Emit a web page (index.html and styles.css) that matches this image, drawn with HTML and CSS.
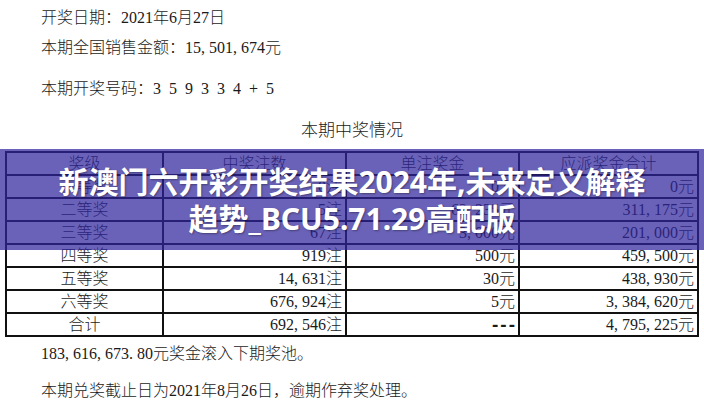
FILE: index.html
```html
<!DOCTYPE html>
<html lang="zh-CN">
<head>
<meta charset="utf-8">
<link rel="stylesheet" href="styles.css">
</head>
<body>
<div class="page">
  <div class="info">
    <p class="line l1">开奖日期：2021年6月27日</p>
    <p class="line l2">本期全国销售金额：15, 501, 674元</p>
    <p class="line l3">本期开奖号码：3&nbsp;&nbsp;5&nbsp;&nbsp;9&nbsp;&nbsp;3&nbsp;&nbsp;3&nbsp;&nbsp;4&nbsp;&nbsp;+&nbsp;&nbsp;5</p>
  </div>
  <p class="title">本期中奖情况</p>
  <table class="prize">
    <colgroup>
      <col class="c1"><col class="c2"><col class="c3"><col class="c4">
    </colgroup>
    <tr class="head"><th>奖级</th><th>中奖注数</th><th>单注奖金</th><th>应派奖金合计</th></tr>
    <tr><td class="lv">一等奖</td><td>0注</td><td>0元</td><td>0元</td></tr>
    <tr><td class="lv">二等奖</td><td>5注</td><td>62, 235元</td><td>311, 175元</td></tr>
    <tr><td class="lv">三等奖</td><td>67注</td><td>3, 000元</td><td>201, 000元</td></tr>
    <tr><td class="lv">四等奖</td><td>919注</td><td>500元</td><td>459, 500元</td></tr>
    <tr><td class="lv">五等奖</td><td>14, 631注</td><td>30元</td><td>438, 930元</td></tr>
    <tr><td class="lv">六等奖</td><td>676, 924注</td><td>5元</td><td>3, 384, 620元</td></tr>
    <tr><td class="lv">合计</td><td>692, 546注</td><td class="dash">---</td><td>4, 795, 225元</td></tr>
  </table>
  <p class="foot f1">183, 616, 673. 80元奖金滚入下期奖池。</p>
  <p class="foot f2">本期兑奖截止日为2021年8月26日，逾期作弃奖处理。</p>
</div>
<div class="banner">
  <div class="banner-text">新澳门六开彩开奖结果2024年,未来定义解释<br>趋势_BCU5.71.29高配版</div>
</div>
</body>
</html>
```
FILE: styles.css
```css
html, body {
  margin: 0;
  padding: 0;
  background: #ffffff;
}
body {
  width: 704px;
  height: 400px;
  overflow: hidden;
  position: relative;
  font-family: "Liberation Serif", "Noto Sans CJK SC", serif;
  color: #1a1a1a;
}
.page {
  padding-top: 8px;
}
.info {
  padding-left: 41px;
}
.line {
  margin: 0;
  font-size: 16px;
  line-height: 20px;
  height: 20px;
  font-weight: 300;
}
.l2 { margin-top: 10px; }
.l3 { margin-top: 21px; }
.title {
  margin: 21px 0 0 0;
  font-size: 17px;
  line-height: 22px;
  text-align: center;
  font-weight: 300;
}
.prize {
  margin: 9px 0 0 5px;
  width: 692px;
  border-collapse: collapse;
  table-layout: fixed;
  font-size: 16px;
  font-weight: 300;
}
.c1 { width: 157px; }
.c2 { width: 183px; }
.c3 { width: 173px; }
.c4 { width: 179px; }
.prize th, .prize td {
  border: 2px solid #111;
  height: 21px;
  padding: 0 3px;
  line-height: 21px;
  text-align: right;
  white-space: nowrap;
}
.prize th {
  font-weight: 300;
  text-align: center;
}
.prize td.lv {
  text-align: center;
}
.prize td.dash {
  font-weight: 700;
  font-family: "Liberation Sans", sans-serif;
  font-size: 19px;
  letter-spacing: 2px;
  padding-right: 1px;
}
.foot {
  margin: 0;
  padding-left: 41px;
  font-size: 16px;
  line-height: 20px;
  font-weight: 300;
}
.f1 { margin-top: 7px; }
.f2 { margin-top: 17px; }
.banner {
  position: absolute;
  left: 0;
  top: 149px;
  width: 704px;
  height: 101px;
  background: rgba(49, 37, 156, 0.72);
  display: flex;
  align-items: center;
  justify-content: center;
}
.banner-text {
  color: #ffffff;
  font-family: "Noto Sans", "Noto Sans CJK SC", sans-serif;
  font-weight: 700;
  font-size: 30px;
  line-height: 37px;
  text-align: center;
  text-shadow: 1px 1px 2px rgba(0, 0, 0, 0.35);
}
```
